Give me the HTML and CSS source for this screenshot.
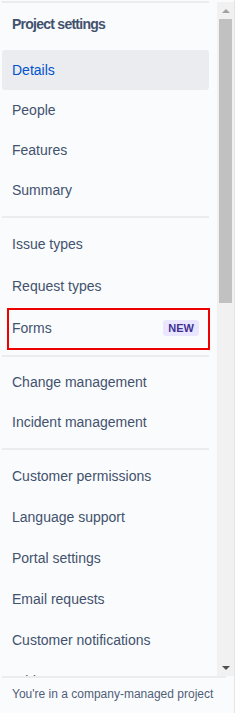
FILE: index.html
```html
<!DOCTYPE html>
<html lang="en">
<head>
    <meta charset="UTF-8">
    <meta name="viewport" content="width=device-width, initial-scale=1.0">
    <title>Project settings</title>
    <link rel="stylesheet" href="styles.css">
</head>
<body>
    <aside class="sidebar">
        <div class="scroll-area">
            <nav class="menu">
                <div class="top-rule"></div>
                <h2 class="menu-title">Project settings</h2>

                <ul class="group">
                    <li class="item selected">Details</li>
                    <li class="item">People</li>
                    <li class="item">Features</li>
                    <li class="item">Summary</li>
                </ul>
                <div class="divider"></div>

                <ul class="group tall">
                    <li class="item">Issue types</li>
                    <li class="item">Request types</li>
                    <li class="item highlight">Forms <span class="badge">NEW</span></li>
                </ul>
                <div class="divider"></div>

                <ul class="group">
                    <li class="item">Change management</li>
                    <li class="item">Incident management</li>
                </ul>
                <div class="divider"></div>

                <ul class="group mid">
                    <li class="item">Customer permissions</li>
                    <li class="item">Language support</li>
                    <li class="item">Portal settings</li>
                    <li class="item">Email requests</li>
                    <li class="item">Customer notifications</li>
                    <li class="item">Widget</li>
                </ul>
            </nav>

            <div class="scrollbar">
                <div class="arrow up"></div>
                <div class="track">
                    <div class="thumb"></div>
                </div>
                <div class="arrow down"></div>
            </div>
        </div>

        <footer class="footer">
            <div class="footer-rule"></div>
            <p>You're in a company-managed project</p>
        </footer>
    </aside>
</body>
</html>
```

FILE: styles.css
```css
body {
    margin: 0;
    background: #fff;
    font-family: "Liberation Sans", Arial, sans-serif;
    color: #42526e;
}

.sidebar {
    width: 234px;
    height: 713px;
    background: #fafbfc;
    border-right: 1px solid #e4e4e4;
    display: flex;
    flex-direction: column;
}

.scroll-area {
    display: flex;
    height: 676px;
}

.menu {
    width: 217px;
    overflow: hidden;
    padding-top: 1px;
    box-sizing: border-box;
}

.top-rule,
.divider,
.footer-rule {
    height: 2px;
    background: #ebecf0;
    margin: 0 8px 0 2px;
}

.divider {
    margin: 6px 8px 5px 2px;
}

.menu-title {
    margin: 0 0 5px;
    padding-left: 12px;
    height: 42px;
    line-height: 42px;
    font-size: 14px;
    font-weight: bold;
    letter-spacing: -0.75px;
    color: #42526e;
}

.group {
    list-style: none;
    margin: 0;
    padding: 0 8px 0 2px;
}

.item {
    position: relative;
    display: flex;
    align-items: center;
    justify-content: space-between;
    height: 40px;
    padding: 0 10px;
    font-size: 14px;
    border-radius: 3px;
}

.group.tall .item {
    height: 42px;
}

.group.mid .item {
    height: 41px;
}

.item.selected {
    background: #ebecf0;
    color: #0052cc;
}

/* red annotation frame drawn over the Forms row */
.item.highlight::after {
    content: "";
    position: absolute;
    top: 1px;
    right: -1px;
    bottom: -1px;
    left: 5px;
    border: 2px solid #ee0000;
}

.badge {
    height: 16px;
    line-height: 16px;
    padding: 0 5px;
    font-size: 11px;
    font-weight: bold;
    color: #403294;
    background: #eae6ff;
    border-radius: 3px;
}

.scrollbar {
    width: 17px;
    margin-top: 2px;
    background: #f1f1f1;
    display: flex;
    flex-direction: column;
}

.arrow {
    height: 17px;
    display: flex;
    align-items: center;
    justify-content: center;
}

.arrow::before {
    content: "";
    border-left: 4px solid transparent;
    border-right: 4px solid transparent;
}

.arrow.up::before {
    border-bottom: 4px solid #a3a3a3;
}

.arrow.down::before {
    border-top: 4px solid #505050;
}

.track {
    flex: 1;
}

.thumb {
    height: 284px;
    margin: 0 2px;
    background: #c1c1c1;
}

.footer {
    flex: 1;
}

.footer p {
    margin: 0;
    padding: 8px 0 0 12px;
    font-size: 12px;
    line-height: 16px;
    color: #505f79;
    white-space: nowrap;
}
```
